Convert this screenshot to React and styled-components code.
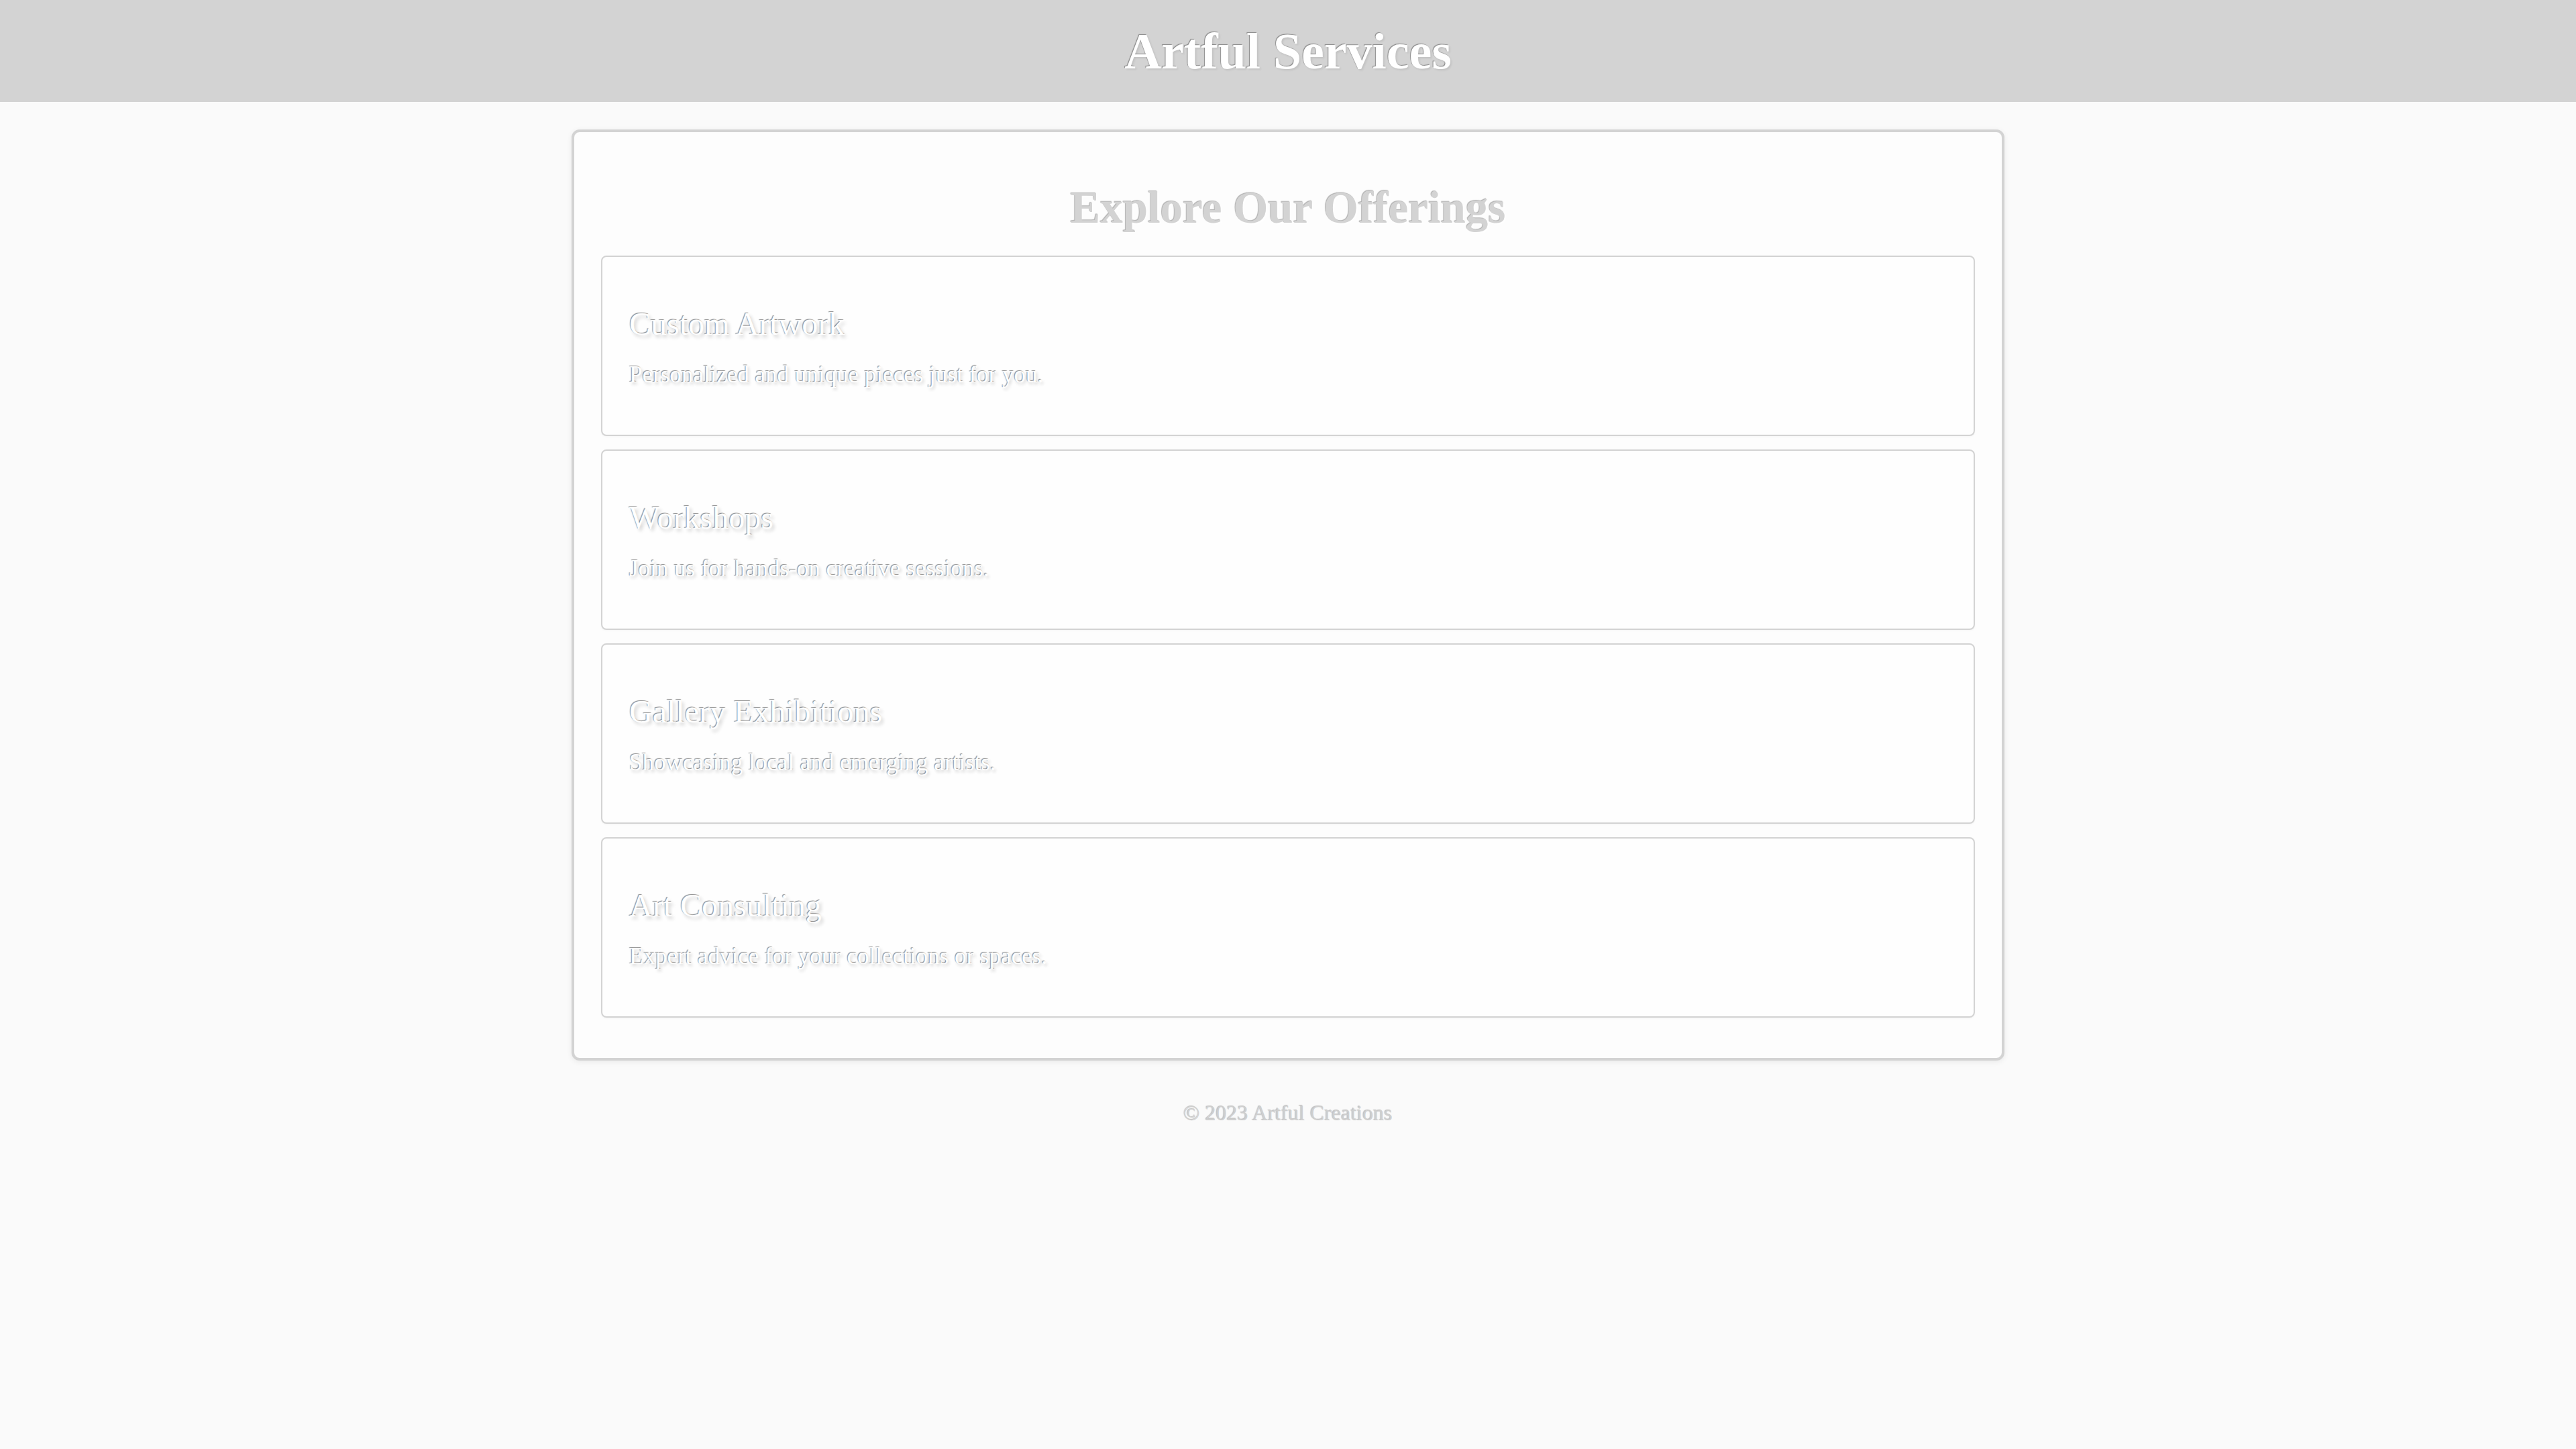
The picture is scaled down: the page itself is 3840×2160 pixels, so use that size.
import React from "react";
import styled, { createGlobalStyle } from "styled-components";

const offerings = [
  { id: 1, title: "Custom Artwork", text: "Personalized and unique pieces just for you." },
  { id: 2, title: "Workshops", text: "Join us for hands-on creative sessions." },
  { id: 3, title: "Gallery Exhibitions", text: "Showcasing local and emerging artists." },
  { id: 4, title: "Art Consulting", text: "Expert advice for your collections or spaces." },
];

const GlobalStyle = createGlobalStyle`
  html, body {
    margin: 0;
    padding: 0;
    background: #fafafa;
    font-family: Georgia, "Liberation Serif", serif;
    font-size: 32px;
  }
`;

const App = () => {
  return (
    <>
      <GlobalStyle />
      <StHeader>
        <h1>Artful Services</h1>
      </StHeader>
      <StMain>
        <StHeading>Explore Our Offerings</StHeading>
        {offerings.map((item) => (
          <StCard key={item.id}>
            <h3>{item.title}</h3>
            <p>{item.text}</p>
          </StCard>
        ))}
      </StMain>
      <StFooter>© 2023 Artful Creations</StFooter>
    </>
  );
};

const StHeader = styled.header`
  background: #d3d3d3;
  padding: 38px 0;
  text-align: center;
  h1 {
    margin: 0;
    font-size: 76px;
    line-height: 76px;
    font-weight: 700;
    color: #fff;
    text-shadow: -1px -1px 1px rgba(0, 0, 0, 0.35), 2px 2px 3px rgba(0, 0, 0, 0.08);
  }
`;

const StMain = styled.main`
  max-width: 2048px;
  margin: 41px auto 0;
  padding: 0 40px 40px;
  background: #fdfdfd;
  border: 4px solid #d3d3d3;
  border-radius: 12px;
  box-shadow: 0 2px 8px rgba(0, 0, 0, 0.07);
`;

const StHeading = styled.h2`
  margin: 0;
  padding: 78px 0 38px;
  text-align: center;
  font-size: 67px;
  line-height: 68px;
  font-weight: 700;
  color: #d3d3d3;
  text-shadow: -1px -1px 1px rgba(0, 0, 0, 0.3), 2px 2px 3px rgba(255, 255, 255, 0.9);
`;

const StCard = styled.section`
  background: #fefefe;
  border: 2px solid #d3d3d3;
  border-radius: 8px;
  padding: 40px;
  margin-bottom: 20px;
  box-shadow: 0 1px 3px rgba(0, 0, 0, 0.04);
  h3 {
    margin: 34px 0 34px;
    font-size: 48px;
    line-height: 51px;
    font-weight: 400;
    color: #fff;
    text-shadow: -1px -1px 1px rgba(0, 0, 0, 0.45), 3px 4px 5px rgba(0, 0, 0, 0.16);
  }
  p {
    margin: 0 0 32px;
    font-size: 35px;
    line-height: 34px;
    color: #fff;
    text-shadow: -1px -1px 1px rgba(0, 0, 0, 0.45), 2px 3px 4px rgba(0, 0, 0, 0.16);
  }
`;

const StFooter = styled.footer`
  padding: 62px 0 58px;
  text-align: center;
  font-size: 32px;
  line-height: 32px;
  color: #cfcfcf;
  text-shadow: -1px -1px 1px rgba(0, 0, 0, 0.25);
`;

export default App;
